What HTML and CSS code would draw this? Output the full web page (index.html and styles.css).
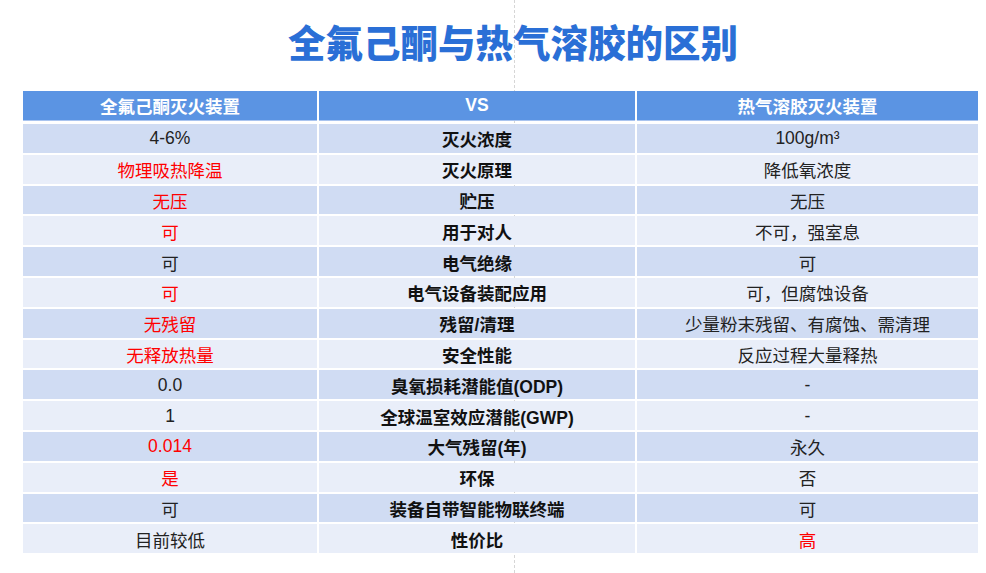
FILE: index.html
```html
<!DOCTYPE html>
<html lang="zh-CN">
<head>
<meta charset="utf-8">
<title>全氟己酮与热气溶胶的区别</title>
<link rel="stylesheet" href="styles.css">
</head>
<body>
<div class="page">
  <div class="guide"></div>
  <h1 class="title">全氟己酮与热气溶胶的区别</h1>
  <div class="table">
    <div class="cell head">全氟己酮灭火装置</div>
    <div class="cell head">VS</div>
    <div class="cell head">热气溶胶灭火装置</div>

    <div class="cell odd">4-6%</div>
    <div class="cell odd key">灭火浓度</div>
    <div class="cell odd">100g/m³</div>

    <div class="cell even red">物理吸热降温</div>
    <div class="cell even key">灭火原理</div>
    <div class="cell even">降低氧浓度</div>

    <div class="cell odd red">无压</div>
    <div class="cell odd key">贮压</div>
    <div class="cell odd">无压</div>

    <div class="cell even red">可</div>
    <div class="cell even key">用于对人</div>
    <div class="cell even">不可，强室息</div>

    <div class="cell odd">可</div>
    <div class="cell odd key">电气绝缘</div>
    <div class="cell odd">可</div>

    <div class="cell even red">可</div>
    <div class="cell even key">电气设备装配应用</div>
    <div class="cell even">可，但腐蚀设备</div>

    <div class="cell odd red">无残留</div>
    <div class="cell odd key">残留/清理</div>
    <div class="cell odd">少量粉末残留、有腐蚀、需清理</div>

    <div class="cell even red">无释放热量</div>
    <div class="cell even key">安全性能</div>
    <div class="cell even">反应过程大量释热</div>

    <div class="cell odd">0.0</div>
    <div class="cell odd key">臭氧损耗潜能值(ODP)</div>
    <div class="cell odd">-</div>

    <div class="cell even">1</div>
    <div class="cell even key">全球温室效应潜能(GWP)</div>
    <div class="cell even">-</div>

    <div class="cell odd red">0.014</div>
    <div class="cell odd key">大气残留(年)</div>
    <div class="cell odd">永久</div>

    <div class="cell even red">是</div>
    <div class="cell even key">环保</div>
    <div class="cell even">否</div>

    <div class="cell odd">可</div>
    <div class="cell odd key">装备自带智能物联终端</div>
    <div class="cell odd">可</div>

    <div class="cell even">目前较低</div>
    <div class="cell even key">性价比</div>
    <div class="cell even red">高</div>
  </div>
</div>
</body>
</html>
```

FILE: styles.css
```css
* { box-sizing: border-box; }

html, body {
  margin: 0;
  padding: 0;
  background: #ffffff;
}

body {
  font-family: "Liberation Sans", "Noto Sans CJK SC", sans-serif;
  color: #222222;
}

.page {
  position: relative;
  width: 986px;
  height: 573px;
  padding: 0 8px 0 23px;
  overflow: hidden;
}

.guide {
  position: absolute;
  left: 514px;
  top: 0;
  bottom: 0;
  width: 0;
  border-left: 1px dashed #d6d6d6;
}

.title {
  position: relative;
  margin: 0;
  height: 91px;
  width: 955px;
  padding-top: 16px;
  padding-left: 25px;
  text-align: center;
  font-family: "Noto Sans CJK SC", sans-serif;
  font-weight: 900;
  font-size: 37.5px;
  line-height: 50px;
  color: #2a6fd6;
}

.table {
  position: relative;
  width: 955px;
  display: grid;
  grid-template-columns: 294px 316px 341px;
  grid-template-rows: 31px;
  grid-auto-rows: 28.8px;
  column-gap: 2px;
  row-gap: 2px;
}

.cell {
  display: flex;
  align-items: center;
  justify-content: center;
  font-size: 17.5px;
  white-space: nowrap;
  padding-top: 1px;
}

.head {
  background: #5b94e3;
  color: #ffffff;
  font-weight: 700;
  font-size: 17.5px;
  box-shadow: 0 1px 0 #a9c4ef;
  margin-bottom: 2px;
  padding-top: 0;
}

.odd { background: #d0dcf3; }
.even { background: #e9eef9; }

.key {
  font-weight: 700;
  color: #111111;
}

.red { color: #ff0000; }
```
